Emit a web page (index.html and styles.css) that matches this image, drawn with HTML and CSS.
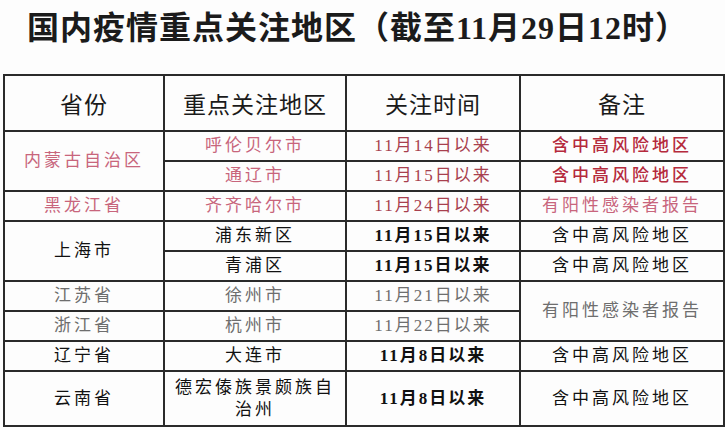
FILE: index.html
```html
<!DOCTYPE html>
<html lang="zh">
<head>
<meta charset="utf-8">
<link rel="stylesheet" href="styles.css">
</head>
<body>
<div class="page">
  <h1 class="title">国内疫情重点关注地区（截至11月29日12时）</h1>
  <table class="grid">
    <colgroup>
      <col class="c1"><col class="c2"><col class="c3"><col class="c4">
    </colgroup>
    <thead>
      <tr class="head"><th>省份</th><th>重点关注地区</th><th>关注时间</th><th>备注</th></tr>
    </thead>
    <tbody>
      <tr class="red">
        <td rowspan="2" class="prov">内蒙古自治区</td>
        <td>呼伦贝尔市</td>
        <td class="time">11月14日以来</td>
        <td class="note">含中高风险地区</td>
      </tr>
      <tr class="red">
        <td>通辽市</td>
        <td class="time">11月15日以来</td>
        <td class="note">含中高风险地区</td>
      </tr>
      <tr class="red">
        <td class="prov">黑龙江省</td>
        <td>齐齐哈尔市</td>
        <td class="time">11月24日以来</td>
        <td>有阳性感染者报告</td>
      </tr>
      <tr class="dark">
        <td rowspan="2" class="prov">上海市</td>
        <td>浦东新区</td>
        <td class="time">11月15日以来</td>
        <td>含中高风险地区</td>
      </tr>
      <tr class="dark">
        <td>青浦区</td>
        <td class="time">11月15日以来</td>
        <td>含中高风险地区</td>
      </tr>
      <tr class="gray">
        <td class="prov">江苏省</td>
        <td>徐州市</td>
        <td class="time">11月21日以来</td>
        <td rowspan="2">有阳性感染者报告</td>
      </tr>
      <tr class="gray">
        <td class="prov">浙江省</td>
        <td>杭州市</td>
        <td class="time">11月22日以来</td>
      </tr>
      <tr class="dark">
        <td class="prov">辽宁省</td>
        <td>大连市</td>
        <td class="time">11月8日以来</td>
        <td>含中高风险地区</td>
      </tr>
      <tr class="dark tall">
        <td class="prov">云南省</td>
        <td class="two">德宏傣族景颇族自<br>治州</td>
        <td class="time">11月8日以来</td>
        <td>含中高风险地区</td>
      </tr>
    </tbody>
  </table>
</div>
</body>
</html>
```

FILE: styles.css
```css
html, body {
  margin: 0;
  padding: 0;
  background: #fdfdfd;
}

.page {
  width: 725px;
  height: 430px;
  overflow: hidden;
  font-family: "Liberation Serif", "Noto Sans CJK SC", serif;
}

.title {
  margin: 0;
  height: 74px;
  padding: 8px 0 0 0;
  box-sizing: border-box;
  text-align: center;
  font-size: 32px;
  line-height: 40px;
  font-weight: 700;
  letter-spacing: 1px;
  color: #1b1b1b;
  padding-right: 10px;
}

.grid {
  margin-left: 3px;
  width: 720px;
  border-collapse: collapse;
  table-layout: fixed;
  border: 2px solid #222;
}

.c1 { width: 160px; }
.c2 { width: 182px; }
.c3 { width: 174px; }
.c4 { width: 204px; }

.grid th,
.grid td {
  border: 2px solid #2a2a2a;
  padding: 0;
  text-align: center;
  vertical-align: middle;
}

.head {
  height: 56px;
}

.head th {
  font-family: "Noto Sans CJK SC", sans-serif;
  font-weight: 400;
  font-size: 23px;
  letter-spacing: 1px;
  color: #1a1a1a;
}

.grid tbody tr {
  height: 30px;
}

.grid tbody tr.tall {
  height: 55px;
}

.grid td {
  font-size: 17px;
  line-height: 22px;
  letter-spacing: 3px;
  font-weight: 400;
}

.grid td.time {
  letter-spacing: 2px;
}

.red td {
  color: #c8657c;
}

.red td.time {
  color: #a8404e;
}

.red td.note {
  color: #b52a3c;
  font-weight: 500;
}

.dark td {
  color: #111;
  font-weight: 400;
}

.dark td.time {
  font-weight: 700;
}

.gray td {
  color: #6e6e6e;
}

.two {
  line-height: 25px;
}
```
